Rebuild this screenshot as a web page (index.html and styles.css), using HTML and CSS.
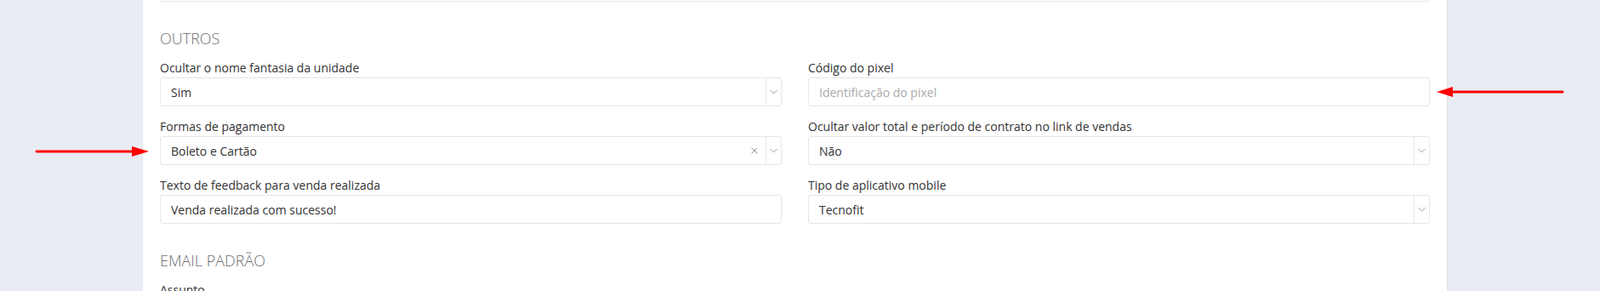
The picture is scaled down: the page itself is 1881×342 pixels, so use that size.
FILE: index.html
```html
<!DOCTYPE html>
<html lang="pt-BR">
<head>
    <meta charset="UTF-8">
    <meta name="viewport" content="width=device-width, initial-scale=1.0">
    <title>Configurações da unidade</title>
    <link rel="stylesheet" href="styles.css">
</head>
<body>
  <div class="page">
    <div class="card">

      <div class="field-cut"></div>

      <h3 class="section-title">OUTROS</h3>
      <div class="form-grid">
        <div class="field">
          <label>Ocultar o nome fantasia da unidade</label>
          <div class="select">
            <span class="select-value">Sim</span>
            <span class="select-arrow"><svg width="9" height="6" viewBox="0 0 9 6"><path d="M0.5 1l4 4 4-4" fill="none" stroke="#999" stroke-width="1"/></svg></span>
          </div>
        </div>
        <div class="field">
          <label>Código do pixel</label>
          <input type="text" class="input" placeholder="Identificação do pixel">
        </div>

        <div class="field">
          <label>Formas de pagamento</label>
          <div class="select">
            <span class="select-value">Boleto e Cartão</span>
            <span class="select-clear"><svg width="8" height="8" viewBox="0 0 8 8"><path d="M0.5 0.5l7 7M7.5 0.5l-7 7" fill="none" stroke="#999" stroke-width="1"/></svg></span>
            <span class="select-arrow"><svg width="9" height="6" viewBox="0 0 9 6"><path d="M0.5 1l4 4 4-4" fill="none" stroke="#999" stroke-width="1"/></svg></span>
          </div>
        </div>
        <div class="field">
          <label>Ocultar valor total e período de contrato no link de vendas</label>
          <div class="select">
            <span class="select-value">Não</span>
            <span class="select-arrow"><svg width="9" height="6" viewBox="0 0 9 6"><path d="M0.5 1l4 4 4-4" fill="none" stroke="#999" stroke-width="1"/></svg></span>
          </div>
        </div>

        <div class="field">
          <label>Texto de feedback para venda realizada</label>
          <input type="text" class="input" value="Venda realizada com sucesso!">
        </div>
        <div class="field">
          <label>Tipo de aplicativo mobile</label>
          <div class="select">
            <span class="select-value">Tecnofit</span>
            <span class="select-arrow"><svg width="9" height="6" viewBox="0 0 9 6"><path d="M0.5 1l4 4 4-4" fill="none" stroke="#999" stroke-width="1"/></svg></span>
          </div>
        </div>
      </div>

      <h3 class="section-title">EMAIL PADRÃO</h3>
      <div class="field">
        <label>Assunto</label>
      </div>
    </div>

    <!-- setas vermelhas de anotação -->
    <svg class="mark mark-left" width="140" height="16" viewBox="0 0 140 16">
      <line x1="2" y1="8" x2="118" y2="8" stroke="#f00" stroke-width="3" stroke-linecap="round"/>
      <polygon points="114,2 134,8 114,14" fill="#f00"/>
    </svg>
    <svg class="mark mark-right" width="152" height="16" viewBox="0 0 152 16">
      <line x1="148" y1="8" x2="20" y2="8" stroke="#f00" stroke-width="3" stroke-linecap="round"/>
      <polygon points="19,2 0,8 19,14" fill="#f00"/>
    </svg>
  </div>
</body>
</html>
```

FILE: styles.css
```css
body {
    font-family: "Open Sans", "Liberation Sans", sans-serif;
    font-size: 14px;
    color: #333;
    background-color: #e9ecf3;
    margin: 0;
    padding: 0;
}

.page {
    position: relative;
    height: 342px;
    overflow: hidden;
}

.card {
    box-sizing: border-box;
    width: 1535px;
    height: 342px;
    margin-left: 167px;
    padding: 0 20px;
    background-color: #fff;
    border-left: 1px solid #e3e6ea;
    border-right: 1px solid #dfe2e8;
}

.field-cut {
    height: 1px;
    border: 1px solid #e5e6e7;
    border-top: none;
    border-radius: 0 0 3px 3px;
}

.section-title {
    margin: 33px 0 15px;
    font-size: 18px;
    line-height: 20px;
    font-weight: 300;
    color: #6f6f70;
}

.form-grid {
    display: grid;
    grid-template-columns: 1fr 1fr;
    column-gap: 31px;
    row-gap: 14px;
}

.field label {
    display: block;
    line-height: 20px;
    margin-bottom: 1px;
    color: #333;
}

.input, .select {
    box-sizing: border-box;
    width: 100%;
    height: 34px;
    border: 1px solid #e5e6e7;
    border-radius: 3px;
    background-color: #fff;
    font-family: inherit;
    font-size: 14px;
    color: #333;
}

.input {
    display: block;
    padding: 6px 12px;
    outline: none;
}

.input::placeholder {
    color: #aaa;
}

.select {
    display: flex;
    align-items: center;
}

.select-value {
    flex: 1;
    padding: 0 12px;
}

.select-clear {
    display: flex;
    width: 20px;
    justify-content: center;
    margin-right: 3px;
}

.select-arrow {
    align-self: stretch;
    width: 17px;
    border-left: 1px solid #e5e6e7;
    display: flex;
    align-items: center;
    justify-content: center;
}

.mark {
    position: absolute;
}

.mark-left {
    left: 41px;
    top: 170px;
}

.mark-right {
    left: 1689px;
    top: 100px;
}
```
